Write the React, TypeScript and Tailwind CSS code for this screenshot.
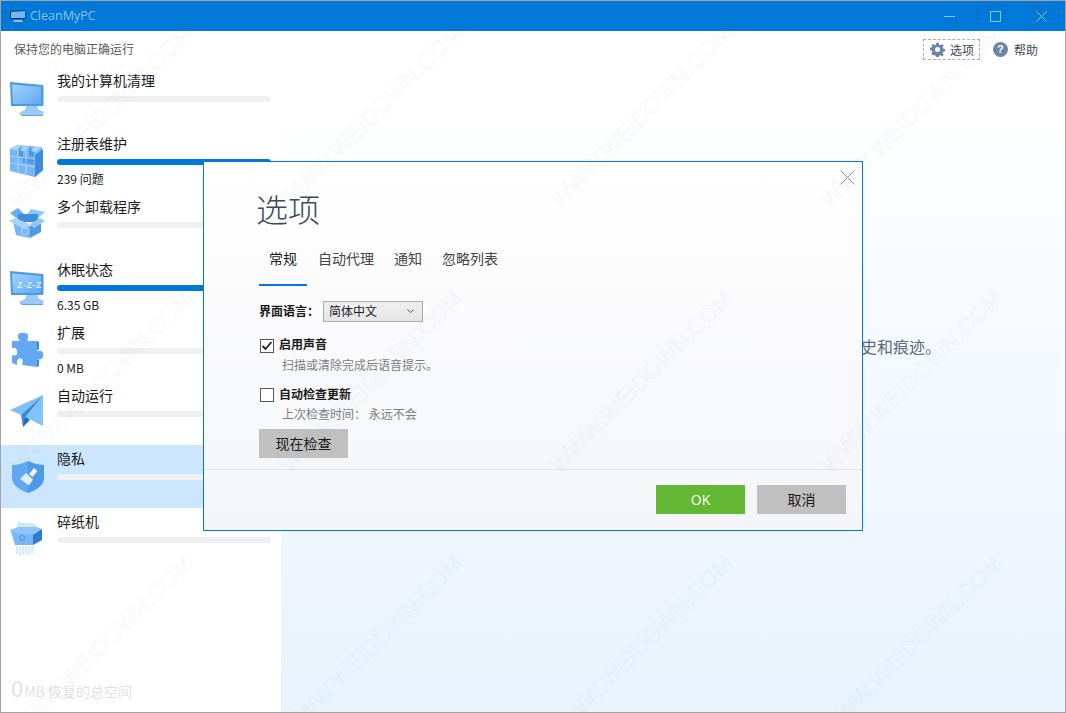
import React from "react"

const yahei = "font-['Noto_Sans_CJK_SC','Noto_Sans',sans-serif]"

// --- sidebar illustrations ---
const Monitor = ({ id, zzz }: { id: string; zzz?: boolean }) => (
  <svg width="36" height="38" viewBox="0 0 36 38" className="overflow-visible">
    <defs>
      <linearGradient id={id} x1="0" y1="0" x2="1" y2="1">
        <stop offset="0" stopColor="#a4d2fb" />
        <stop offset="0.55" stopColor="#7dbcf7" />
        <stop offset="1" stopColor="#62a9f0" />
      </linearGradient>
    </defs>
    <path d="M17 24h10l1 5 6 3-1 3H13l-4-2 6-3z" fill="#9bcaf6" />
    <path d="M9 33l4 2h20v1H12z" fill="#5c9fe2" />
    <path d="M0 2l33 3v21H1z" fill="#4c9ae6" />
    <path d="M2 4.500l29 2.500v17H3z" fill={`url(#${id})`} />
    <path d="M33 5l1 1v19l-1 1z" fill="#a8d2f8" />
    {zzz && (
      <text x="7" y="19" fontSize="9" fontWeight="700" letterSpacing="0.5" fill="#dcecfd" fontFamily="Liberation Sans">
        Z-Z-Z
      </text>
    )}
  </svg>
)

const Cubes = () => (
  <svg width="36" height="36" viewBox="0 0 36 36">
    <path d="M0 6l7-4 25 2 1 23-8 7L0 28z" fill="#79b7f2" />
    <path d="M25 12l8-6v21l-8 7z" fill="#3f8bdc" />
    <path d="M8 4l5 1v9l-5-1zM19 5l5 1v8l-5-1zM13 14l11 1v6l-11-1z" fill="#4f99e4" />
    <path d="M0 13l25 3M0 20l25 4M8 4v27M16 5v27" stroke="#a9d3f8" strokeWidth="1" fill="none" />
    <path d="M0 6l7-4 5 1-5 4zM13 3l6 1-4 4h-5zM24 4l8 0-6 5-5-1z" fill="#a9d4fa" />
  </svg>
)

const BoxIcon = () => (
  <svg width="38" height="36" viewBox="0 0 38 36" className="overflow-visible">
    <path d="M0 7l8-5 8 8-7 4z" fill="#6aaef0" />
    <path d="M21 3l14 3-7 6-12-2z" fill="#8ec5f7" />
    <path d="M8 8h20v8H8z" fill="#3f8ddd" />
    <path d="M3 15l17 5v12L6 29z" fill="#74b5f3" />
    <path d="M20 20l11-5v11l-11 6z" fill="#4d9ae6" />
    <path d="M-1 15l6-3 15 6-4 6z" fill="#a6d3fa" />
    <path d="M20 18l10-6 5 3-11 7z" fill="#93c8f8" />
    <circle cx="15" cy="25" r="3.500" fill="none" stroke="#a8d2f8" strokeWidth="1.200" />
  </svg>
)

const Puzzle = () => (
  <svg width="34" height="36" viewBox="0 0 34 36">
    <path
      d="M2 9H9C11 9 7 6 8 3C9 0 17 0 18 3C19 6 16 9 18 9H27V18C27 20 29 18 31 19C34 20 34 26 31 27C29 28 27 26 27 28V35L13 33C11 33 14 29 12 27C10 25 7 27 7 30V33L2 31V24C2 22 6 25 7 22C8 19 6 15 4 16C2 16 2 17 2 16z"
      fill="#63a9f1"
    />
    <path d="M27 9v9l2-.5V10zM27 28v7l2-1v-7z" fill="#3f86d6" />
  </svg>
)

const Plane = () => (
  <svg width="36" height="36" viewBox="0 0 36 36">
    <path d="M33 0L0 15l11 5z" fill="#7fc0fb" />
    <path d="M33 0L11 20l2 12z" fill="#3789e0" />
    <path d="M33 0L15 22l18 9z" fill="#84c2fb" />
    <path d="M15 22l5 3-7 7z" fill="#1a6cc6" />
  </svg>
)

const Shield = () => (
  <svg width="34" height="38" viewBox="0 0 34 38">
    <path d="M2 7c6 0 12-2 16-4 4 2 10 4 16 4v13c0 8-10 13-16 15C12 33 2 28 2 20z" fill="#60a9f0" />
    <path d="M18 3c4 2 10 4 16 4v13c0 8-10 13-16 15z" fill="#4e9ae8" />
    <path d="M24 10l3.500 3-5 6-3.500-3z" fill="#eef7ff" />
    <path d="M16 15l7 6.500-4 6-9-6.500z" fill="#e0effe" />
  </svg>
)

const Shredder = () => (
  <svg width="36" height="36" viewBox="0 0 36 36">
    <path d="M8 1l18 2 1 6H6z" fill="#cfe6fb" />
    <path d="M0 9l8-3h19l5 2-8 6H3z" fill="#8ec5f6" />
    <path d="M1 11l22 3v10H5z" fill="#78b8f4" />
    <path d="M23 14l9-6v11l-9 5z" fill="#2f7bd0" />
    <circle cx="12" cy="17" r="2.500" fill="none" stroke="#4a93de" />
    <path d="M7 25v8M10 25v9M13 25v9M16 25v9M19 25v9M22 25v8" stroke="#cde4fa" strokeWidth="1.500" />
  </svg>
)

type Item = {
  label: string
  icon: React.ReactNode
  progress?: boolean
  sub?: string
  selected?: boolean
}

const items: Item[] = [
  { label: "我的计算机清理", icon: <Monitor id="scr1" /> },
  { label: "注册表维护", icon: <Cubes />, progress: true, sub: "239 问题" },
  { label: "多个卸载程序", icon: <BoxIcon /> },
  { label: "休眠状态", icon: <Monitor id="scr2" zzz />, progress: true, sub: "6.35 GB" },
  { label: "扩展", icon: <Puzzle />, sub: "0 MB" },
  { label: "自动运行", icon: <Plane /> },
  { label: "隐私", icon: <Shield />, selected: true },
  { label: "碎纸机", icon: <Shredder /> },
]

const SideRow = ({ item }: { item: Item }) => (
  <div className={`h-[63px] flex pl-[9px] ${item.selected ? "bg-[#cce6fd]" : ""}`}>
    <div className="w-[47px] shrink-0 pt-[13px]">{item.icon}</div>
    <div className="w-[214px]">
      <div className="h-[29px] pt-[2px] text-[14px] leading-[22px] text-[#1a1a1a]">{item.label}</div>
      <div className={`h-[6px] rounded-[3px] ${item.progress ? "bg-[#0078d7]" : "bg-[#f0f0f0]"}`} />
      {item.sub && <div className="pt-[5px] text-[12px] leading-[18px] text-[#1a1a1a]">{item.sub}</div>}
    </div>
  </div>
)

const watermarkPositions = [
  [100, 115], [370, 115], [640, 115], [910, 115],
  [100, 380], [370, 380], [640, 380], [910, 380],
  [100, 645], [370, 645], [640, 645], [910, 645],
]

const Watermarks = () => (
  <div className="absolute inset-0 overflow-hidden pointer-events-none">
    {watermarkPositions.map(([x, y]) => (
      <div
        key={`${x}-${y}`}
        className="absolute w-[280px] h-[30px] leading-[30px] text-center -rotate-45 whitespace-nowrap font-['Liberation_Sans',sans-serif] text-[23px] text-transparent [-webkit-text-stroke:1px_rgba(110,135,170,0.08)]"
        style={{ left: x - 140, top: y - 15 }}
      >
        WWW.WEIDOWN.COM
      </div>
    ))}
  </div>
)

const Dialog = () => (
  <div className="absolute left-[202px] top-[160px] w-[660px] h-[370px] border border-[#0078d7] bg-gradient-to-b from-white to-[#f4f5f8] flex flex-col">
    <svg className="absolute right-[6px] top-[7px]" width="17" height="17" viewBox="0 0 17 17">
      <path d="M1.500 1.500l14 14M15.500 1.500l-14 14" stroke="#8f8f8f" strokeWidth="1" fill="none" />
    </svg>
    <div className="pl-[52px] pt-[24px] h-[72px] text-[32px] leading-[44px] font-light text-[#3e4a5a]">选项</div>

    <div className="pl-[55px] flex h-[52px] text-[14px] leading-[22px] text-[#444]">
      <div className="w-[48px] text-center pt-[13px] h-[52px] border-b-2 border-[#0078e8] text-[#1a1a1a]">常规</div>
      <div className="ml-[11px] pt-[13px]">自动代理</div>
      <div className="ml-[20px] pt-[13px]">通知</div>
      <div className="ml-[20px] pt-[13px]">忽略列表</div>
    </div>

    <div className="pl-[55px] flex-1 flex flex-col">
      <div className="flex items-center mt-[14px] h-[22px]">
        <span className="text-[12px] font-bold text-[#1a1a1a] w-[64px]">界面语言：</span>
        <div className="w-[100px] h-[21px] border border-[#acacac] bg-gradient-to-b from-[#f0f0f0] to-[#e5e5e5] flex items-center justify-between pl-[5px] pr-[8px] text-[12px] text-[#222]">
          简体中文
          <svg width="7" height="5" viewBox="0 0 7 5">
            <path d="M.5.500l3 3 3-3" stroke="#555" fill="none" />
          </svg>
        </div>
      </div>

      <div className="flex items-center mt-[13px] h-[18px] pl-[1px]">
        <div className="mt-[3px] w-[14px] h-[14px] border border-[#555] bg-white flex items-center justify-center">
          <svg width="12" height="10" viewBox="0 0 12 10">
            <path d="M1.500 5l3 3 6-7" stroke="#222" strokeWidth="1.800" fill="none" />
          </svg>
        </div>
        <span className="ml-[5px] text-[12px] font-bold text-[#1a1a1a]">启用声音</span>
      </div>
      <div className="pl-[23px] mt-[3px] h-[18px] text-[12px] leading-[18px] text-[#7d7d7d] whitespace-nowrap">扫描或清除完成后语音提示。</div>

      <div className="flex items-center mt-[11px] h-[18px] pl-[1px]">
        <div className="mt-[2px] w-[14px] h-[14px] border border-[#555] bg-white" />
        <span className="ml-[5px] text-[12px] font-bold text-[#1a1a1a]">自动检查更新</span>
      </div>
      <div className="pl-[23px] mt-[2px] h-[18px] text-[12px] leading-[18px] text-[#7d7d7d] whitespace-pre">上次检查时间： 永远不会</div>

      <button className="mt-[6px] w-[89px] h-[29px] bg-[#c0c0c0] text-[14px] text-[#1a1a1a]">现在检查</button>
    </div>

    <div className="h-[61px] border-t border-[#d9e4ee] flex justify-end gap-[12px] pr-[16px] pt-[15px]">
      <button className="w-[89px] h-[29px] bg-[#62b733] text-[14px] text-white font-['Open_Sans',sans-serif]">OK</button>
      <button className="w-[89px] h-[29px] bg-[#c0c0c0] text-[14px] text-[#1a1a1a]">取消</button>
    </div>
  </div>
)

export default function App() {
  return (
    <div className={`relative w-[1066px] h-[713px] overflow-hidden border border-[#a3a3a3] bg-white flex flex-col ${yahei}`}>
      {/* title bar */}
      <div className="h-[30px] shrink-0 bg-[#0078d7] flex items-center pl-[9px]">
        <svg width="16" height="13" viewBox="0 0 16 13">
          <path d="M0 1l15-1 1 9H0z" fill="#143a63" />
          <path d="M1 2l14-1v7H1z" fill="#6db8ee" />
          <path d="M4 10h8l1 2H3z" fill="#9fb8cc" />
        </svg>
        <span className="ml-[4px] text-[12.500px] text-[#8cc4ee] font-['Open_Sans',sans-serif]">CleanMyPC</span>
        <div className="ml-auto flex items-center pr-[18px] gap-[35px]">
          <div className="w-[11px] h-px bg-[#8cc4ee]" />
          <div className="w-[11px] h-[11px] border border-[#8cc4ee]" />
          <svg width="11" height="11" viewBox="0 0 11 11">
            <path d="M.5.500l10 10M10.500.500l-10 10" stroke="#8cc4ee" fill="none" />
          </svg>
        </div>
      </div>

      <div className="flex-1 flex min-h-0">
        {/* sidebar */}
        <div className="w-[280px] shrink-0 bg-white flex flex-col">
          <div className="h-[36px] pl-[13px] pt-[9px] text-[12px] leading-[18px] text-[#5a5a5a]">保持您的电脑正确运行</div>
          {items.map(item => (
            <SideRow key={item.label} item={item} />
          ))}
          <div className="mt-auto h-[40px] pl-[10px] flex items-baseline text-[#e2e2e2]">
            <span className="text-[22px] leading-[30px]">0</span>
            <span className="ml-[1px] text-[14px]">MB 恢复的总空间</span>
          </div>
        </div>

        {/* main */}
        <div className="flex-1 bg-gradient-to-b from-white from-[10%] to-[#e8f3fd] flex flex-col">
          <div className="flex justify-end items-center h-[37px] pr-[27px] text-[12px] text-[#3a4656]">
            <div className="flex items-center h-[21px] w-[57px] pl-[6px] border border-dashed border-[#aaa]">
              <svg width="15" height="15" viewBox="0 0 24 24" fill="#6b85a8">
                <path d="M10 1h4l.6 3.200 2 .8L19.300 3l2.800 2.800-1.900 2.700.8 2 3 .5v4l-3 .6-.8 2 1.800 2.600-2.800 2.800-2.700-1.900-2 .8-.5 3.100h-4l-.6-3.100-2-.8L4.700 21l-2.800-2.800 1.900-2.600-.8-2-3-.6v-4l3-.5.8-2L2 5.800 4.700 3l2.700 2 2-.8z" />
                <circle cx="12" cy="12" r="4" fill="#fff" />
              </svg>
              <span className="ml-[5px]">选项</span>
            </div>
            <div className="ml-[13px] flex items-center">
              <div className="w-[15px] h-[15px] rounded-full bg-[#6b85a8] text-white text-[11px] leading-[15px] font-bold text-center font-['Liberation_Sans',sans-serif]">?</div>
              <span className="ml-[6px]">帮助</span>
            </div>
          </div>
          <div className="pt-[263px] pl-[580px] whitespace-nowrap text-[16px] leading-[30px] text-[#626b78]">史和痕迹。</div>
        </div>
      </div>

      <Dialog />
      <Watermarks />
    </div>
  )
}
